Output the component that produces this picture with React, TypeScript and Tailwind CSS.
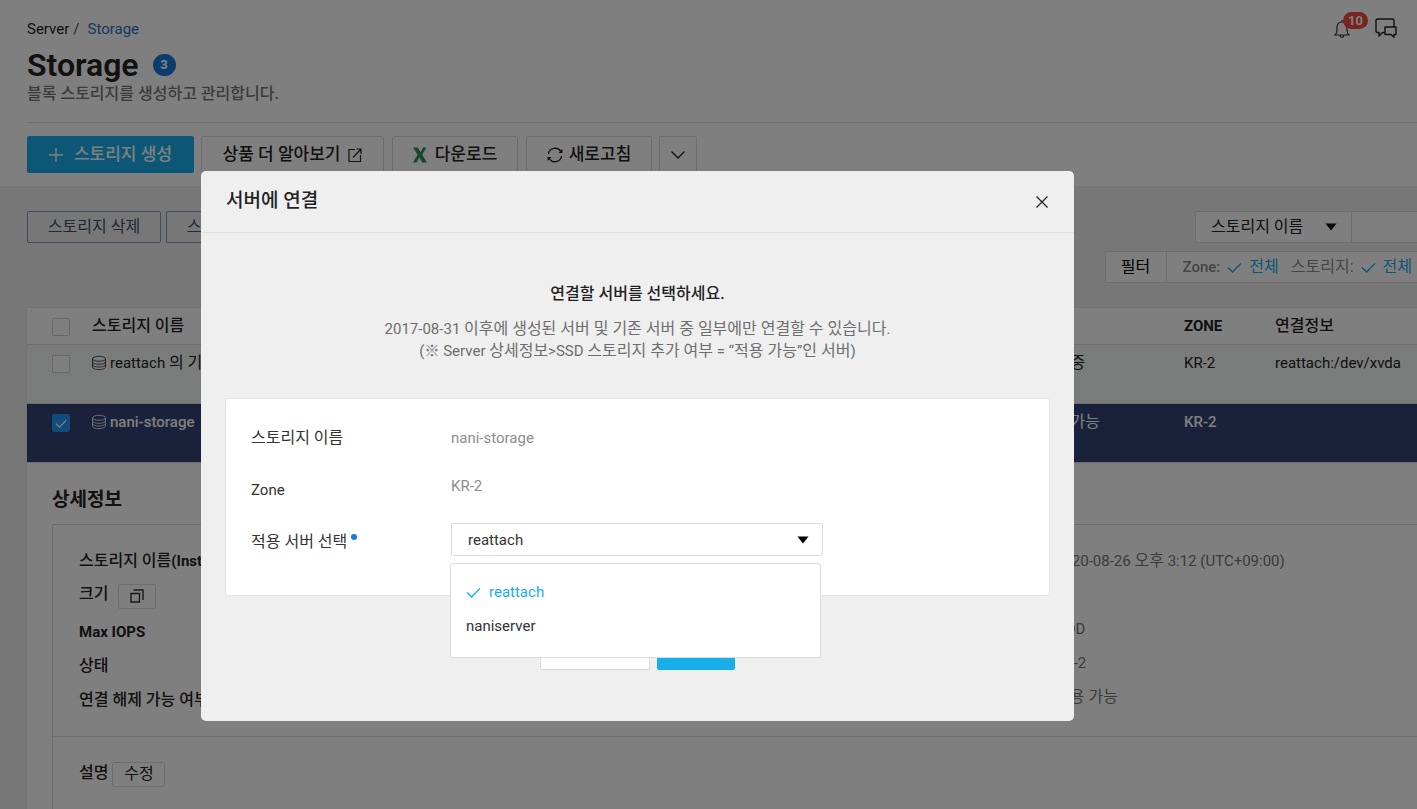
import React from "react";

const SANS = "font-['Roboto','Noto_Sans_CJK_KR',sans-serif]";

/* Hangul runs are set one pixel larger than the Latin text around them. */
function Mixed({ text }: { text: string }) {
  const parts = text.split(/([\u3131-\uD79D]+(?: +[\u3131-\uD79D]+)*)/);
  return (
    <>
      {parts.map((part, i) =>
        i % 2 === 1 ? (
          <span key={i} className="text-[16px]">
            {part}
          </span>
        ) : (
          part
        ),
      )}
    </>
  );
}

function Check({ className }: { className: string }) {
  return (
    <svg viewBox="0 0 16 12" className={className} fill="none" stroke="currentColor" strokeWidth="1.5" aria-hidden="true">
      <path d="M1 6l5 5 9-9.500" />
    </svg>
  );
}

function Database() {
  return (
    <svg viewBox="1 0 14 16" className="h-4 w-[14px] shrink-0" fill="none" stroke="currentColor" strokeWidth="0.8" aria-hidden="true">
      <ellipse cx="8" cy="3.800" rx="6.500" ry="2.500" />
      <path d="M1.500 4v8c0 1.500 2.900 2.600 6.500 2.600s6.500-1.100 6.500-2.600V4M1.500 6.700c0 1.500 2.900 2.600 6.500 2.600s6.500-1.100 6.500-2.600M1.500 9.400c0 1.500 2.900 2.600 6.500 2.600s6.500-1.100 6.500-2.600" />
    </svg>
  );
}

function Caret() {
  return (
    <svg viewBox="0 0 12 8" className="pointer-events-none absolute top-1/2 right-[14px] h-2 w-3 -translate-y-1/2" aria-hidden="true">
      <path d="M0.500 0.500h11L6 7.500z" fill="#000" />
    </svg>
  );
}

function Header() {
  return (
    <header className="bg-white pt-[18px] pb-[13px] pl-[27px]">
      <div className="flex items-start justify-between">
        <div>
          <nav className="flex gap-1 leading-[22px]">
            <a href="#server">Server</a>
            <span className="mr-1 text-[#555]">/</span>
            <a href="#storage" className="text-[#2a6fc9]">Storage</a>
          </nav>
          <div className="mt-1 flex items-center gap-[14px]">
            <h1 className="text-[32px] leading-[42px] font-semibold">Storage</h1>
            <span className="flex h-[22px] w-[23px] items-center justify-center rounded-full bg-[#1779d8] text-[13px] font-bold text-white">3</span>
          </div>
          <p className="text-[16px] leading-[16px] font-medium text-[#777]">블록 스토리지를 생성하고 관리합니다.</p>
        </div>
        <div className="flex items-start gap-2 pr-5">
          <button type="button" aria-label="알림" className="relative h-[22px] w-[33px]">
            <svg viewBox="0 0 16 20" className="h-5 w-4" fill="none" stroke="#333" strokeWidth="1.200" aria-hidden="true">
              <path d="M1 16h14c-1.500-1.500-2-3-2-5V8.500C13 5 11 3 8 3S3 5 3 8.500V11c0 2-.5 3.500-2 5zM8 3V1M6.300 16.500c0 2.500 3.400 2.500 3.400 0" />
            </svg>
            <span className="absolute -top-[6px] left-[9px] flex h-[17px] w-[25px] items-center justify-center rounded-full bg-[#f0483e] text-[13px] font-bold text-white">10</span>
          </button>
          <button type="button" aria-label="문의">
            <svg viewBox="0 0 22 20" className="h-5 w-[22px]" fill="none" stroke="#222" strokeWidth="1.400" strokeLinejoin="round" aria-hidden="true">
              <path d="M10 14.500H7.500L4 18v-3.500H2.500C1.500 14.500 1 14 1 13V2.500C1 1.500 1.500 1 2.500 1h15c1 0 1.500.5 1.500 1.500V9M10 9h11v7.500h-2V19.300l-3-2.800h-6z" />
            </svg>
          </button>
        </div>
      </div>
      <div className="mt-5 flex gap-2 border-t border-[#dcdcdc] pt-[13px] text-[17px] font-medium">
        <button type="button" className="mr-[-1px] flex h-[37px] w-[167px] items-center justify-center gap-[11px] rounded-[2px] bg-[#17aeea] text-white">
          <svg viewBox="0 0 14 14" className="size-[14px]" stroke="currentColor" strokeWidth="1.500" aria-hidden="true">
            <path d="M7 0v14M0 7h14" />
          </svg>
          스토리지 생성
        </button>
        <button type="button" className="flex h-[37px] w-[183px] items-center justify-center gap-2 rounded-[2px] border border-[#dcdcdc]">
          상품 더 알아보기
          <svg viewBox="0 0 14 14" className="size-[14px]" fill="none" stroke="currentColor" strokeWidth="1.200" aria-hidden="true">
            <path d="M7 1.500H1v12h11.500V7M5 9.500L13 1M8.500 1H13v5" />
          </svg>
        </button>
        <button type="button" className="flex h-[37px] w-[126px] items-center justify-center gap-2 rounded-[2px] border border-[#dcdcdc]">
          <svg viewBox="0 0 14 16" className="h-4 w-[14px]" fill="#2d8c5a" aria-hidden="true">
            <path d="M0 .5h4.800l2.700 4.700L10 .5h3.600L9.200 7.800 14 15.500H9.200L6.300 10.500l-2.700 5H0l4.600-7.700z" />
          </svg>
          다운로드
        </button>
        <button type="button" className="flex h-[37px] w-[126px] items-center justify-center gap-[6px] rounded-[2px] border border-[#dcdcdc]">
          <svg viewBox="0 0 16 16" className="size-4" fill="none" stroke="currentColor" strokeWidth="1.400" aria-hidden="true">
            <path d="M1.500 7A6.600 6.600 0 0 1 14 5M14.500 9A6.600 6.600 0 0 1 2 11" />
            <path d="M15.500 2v4h-4zM0.500 14v-4h4z" fill="currentColor" stroke="none" />
          </svg>
          새로고침
        </button>
        <button type="button" aria-label="더보기" className="mr-auto -ml-px flex h-[37px] w-[38px] items-center justify-center rounded-[2px] border border-[#dcdcdc]">
          <svg viewBox="0 0 14 8" className="h-2 w-[14px]" fill="none" stroke="currentColor" strokeWidth="1.400" aria-hidden="true">
            <path d="M0.500 0.500L7 7l6.500-6.500" />
          </svg>
        </button>
      </div>
    </header>
  );
}

function Controls() {
  const outline = "h-8 w-[134px] rounded-[2px] border border-[#8398b8] text-[16px] text-[#3c5071]";
  return (
    <div className="flex items-start justify-between pt-[25px] pl-[27px]">
      <div className="flex gap-[5px]">
        <button type="button" className={outline}>스토리지 삭제</button>
        <button type="button" className={outline}>스토리지 연결</button>
      </div>
      <div className="flex flex-col items-end gap-2">
        <div className="flex h-8 rounded-l-[2px] border border-r-0 border-[#dcdcdc] bg-white text-[16px]">
          <div className="relative w-[156px] border-r border-[#dcdcdc]">
            <select aria-label="검색 조건" className="h-full w-full appearance-none bg-transparent pl-[15px]">
              <option>스토리지 이름</option>
            </select>
            <Caret />
          </div>
          <input aria-label="검색어" className="w-[65px] min-w-0 bg-transparent px-2" />
        </div>
        <div className="flex h-8 items-center rounded-l-[2px] border border-r-0 border-[#dcdcdc] bg-white pr-[5px] text-[#8a8a8a]">
          <span className="mr-4 flex h-full w-[61px] items-center justify-center border-r border-[#dcdcdc] text-[16px] text-black">필터</span>
          <span className="font-medium">Zone:</span>
          <Check className="mr-[7px] ml-[7px] h-[11px] w-[15px] text-[#17aeea]" />
          <a href="#zone" className="text-[16px] text-[#17aeea]">전체</a>
          <span className="ml-3 text-[16px]">스토리지:</span>
          <Check className="mr-[7px] ml-[7px] h-[11px] w-[15px] text-[#17aeea]" />
          <a href="#kind" className="text-[16px] text-[#17aeea]">전체</a>
        </div>
      </div>
    </div>
  );
}

function Tick({ label, on }: { label: string; on?: boolean }) {
  return (
    <label className="relative mt-[2px] block size-[18px]">
      <input
        type="checkbox"
        aria-label={label}
        defaultChecked={on}
        className="block size-[18px] appearance-none rounded-[2px] border border-[#d0d0d0] bg-white checked:border-[#2196f3] checked:bg-[#2196f3]"
      />
      {on && <Check className="pointer-events-none absolute top-[5px] left-[3px] h-[9px] w-3 text-white" />}
    </label>
  );
}

function StorageTable() {
  return (
    <table className="w-full table-fixed border-collapse text-left align-top">
      <colgroup>
        <col className="w-[65px]" />
        <col />
        <col className="w-[147px]" />
        <col className="w-[91px]" />
        <col className="w-[142px]" />
      </colgroup>
      <thead>
        <tr className="h-[36px] border-b border-[#dcdcdc] bg-white">
          <th className="pl-[25px]"><Tick label="모두 선택" /></th>
          <th className="text-[16px] font-medium">스토리지 이름</th>
          <th className="text-[16px] font-medium">상태</th>
          <th className="font-bold">ZONE</th>
          <th className="text-[16px] font-medium">연결정보</th>
        </tr>
      </thead>
      <tbody>
        <tr className="h-[59px] border-b border-[#dcdcdc] bg-[#f4f8f6] align-top leading-6">
          <td className="pt-[8px] pl-[25px]"><Tick label="reattach 선택" /></td>
          <td className="pt-[6px]">
            <span className="flex items-center gap-1"><Database /><span><Mixed text="reattach 의 기본 스토리지" /></span></span>
          </td>
          <td className="pt-[6px] text-[16px]">사용 중</td>
          <td className="pt-[6px]">KR-2</td>
          <td className="pt-[6px]">reattach:/dev/xvda</td>
        </tr>
        <tr className="h-[59px] border-b border-[#dcdcdc] bg-[#334474] align-top leading-6 font-medium text-white">
          <td className="pt-[8px] pl-[25px]"><Tick label="nani-storage 선택" on /></td>
          <td className="pt-[6px]">
            <span className="flex items-center gap-1"><Database />nani-storage</span>
          </td>
          <td className="pt-[6px] text-[16px] font-normal">연결 가능</td>
          <td className="pt-[6px]">KR-2</td>
          <td />
        </tr>
      </tbody>
    </table>
  );
}

const NAMES = ["스토리지 이름(Instance ID)", "크기", "Max IOPS", "상태", "연결 해제 가능 여부"];
const VALUES = ["2020-08-26 오후 3:12 (UTC+09:00)", "", "HDD", "KR-2", "사용 가능"];

function Details() {
  return (
    <section className="pt-6 pl-[25px]">
      <h2 className="text-[19px] leading-[25px] font-bold">상세정보</h2>
      <div className="mt-3 rounded-tl-[2px] border-t border-l border-[#dcdcdc]">
        <div className="flex h-[212px] border-b border-[#dcdcdc] pt-[19px] pl-[26px]">
          <ul className="w-[976px] shrink-0 font-bold">
            {NAMES.map((name) =>
              name === "크기" ? (
                <li key={name} className="flex h-[37px] items-start gap-[10px]">
                  <span className="text-[16px] leading-8 font-medium">{name}</span>
                  <button type="button" aria-label="크기 변경" className="mt-[6px] flex h-[25px] w-[38px] items-center justify-center rounded-[2px] border border-[#dcdcdc]">
                    <svg viewBox="0 0 14 14" className="size-[14px]" fill="none" stroke="#333" strokeWidth="1.400" aria-hidden="true">
                      <path d="M1 4.500h8.500V13H1zM3.500 1h9.500v10" />
                    </svg>
                  </button>
                </li>
              ) : (
                <li key={name} className="h-[34px] leading-[34px] [&>span]:font-medium">
                  <Mixed text={name} />
                </li>
              ),
            )}
          </ul>
          <ul className="leading-[34px] whitespace-nowrap text-[#777]">
            {VALUES.map((value) => (
              <li key={value} className="h-[34px]"><Mixed text={value} /></li>
            ))}
          </ul>
        </div>
        <div className="flex h-24 items-start gap-1 pt-[25px] pl-[26px] text-[16px]">
          <span className="leading-[22px] font-medium">설명</span>
          <button type="button" className="h-[25px] w-[53px] rounded-[2px] border border-[#dcdcdc] leading-[22px]">수정</button>
        </div>
      </div>
    </section>
  );
}

function ConnectDialog() {
  const label = "w-[200px] shrink-0";
  return (
    <div role="dialog" aria-modal="true" aria-labelledby="dialog-title" className="w-[873px] rounded-[5px] bg-[#efefef] pb-[51px]">
      <div className="flex h-[62px] items-center justify-between border-b border-[#e0e0e0] pr-[26px] pl-[25px]">
        <h2 id="dialog-title" className="text-[19px] font-medium">서버에 연결</h2>
        <button type="button" aria-label="닫기">
          <svg viewBox="0 0 12 12" className="size-3" stroke="#222" strokeWidth="1.300" aria-hidden="true">
            <path d="M0.500 0.500l11 11M11.500 0.500l-11 11" />
          </svg>
        </button>
      </div>
      <div className="pt-[49px] text-center leading-[22px]">
        <p className="text-[16px] leading-6 font-medium">연결할 서버를 선택하세요.</p>
        <p className="mt-3 text-[#6e6e6e]">
          <Mixed text="2017-08-31 이후에 생성된 서버 및 기존 서버 중 일부에만 연결할 수 있습니다." />
          <br />
          <Mixed text="(※ Server 상세정보>SSD 스토리지 추가 여부 = “적용 가능”인 서버)" />
        </p>
      </div>
      <div className="mx-6 mt-9 h-[198px] rounded-[3px] border border-[#e4e4e4] bg-white pt-[27px] pl-[25px] leading-6 text-[#333]">
        <div className="flex h-[48px]">
          <span className={label}><Mixed text="스토리지 이름" /></span>
          <span className="text-[#8e8e8e]">nani-storage</span>
        </div>
        <div className="flex h-[49px]">
          <span className={`${label} pt-1`}>Zone</span>
          <span className="text-[#8e8e8e]">KR-2</span>
        </div>
        <div className="flex items-center">
          <label htmlFor="server" className="flex w-[200px] shrink-0 gap-1 pt-1">
            <Mixed text="적용 서버 선택" />
            <span className="mt-1 size-[6px] rounded-full bg-[#1779d8]" />
          </label>
          <div className="relative w-[372px]">
            <select id="server" className="block h-[33px] w-full appearance-none rounded-[2px] border border-[#dcdcdc] bg-white pl-4">
              <option>reattach</option>
              <option>naniserver</option>
            </select>
            <Caret />
            <ul role="listbox" aria-label="서버" className="absolute top-10 -left-px h-[95px] w-[371px] rounded-[3px] border border-[#dcdcdc] bg-white px-[15px] py-[11px]">
              <li role="option" aria-selected="true" className="flex h-[34px] items-center gap-2 text-[#17aeea]">
                <Check className="h-[11px] w-[15px]" />
                reattach
              </li>
              <li role="option" aria-selected="false" className="flex h-[34px] items-center">naniserver</li>
            </ul>
          </div>
        </div>
      </div>
      <div className="mt-[34px] flex justify-center gap-[7px] text-[16px] font-medium">
        <button type="button" className="h-10 w-[110px] rounded-[2px] border border-[#dcdcdc] bg-white">취소하기</button>
        <button type="button" className="h-10 w-[78px] rounded-[2px] bg-[#17aeea] text-white">연결</button>
      </div>
    </div>
  );
}

export default function App() {
  return (
    <div className={`${SANS} relative h-screen overflow-hidden bg-[#efefef] text-[15px] text-[#222]`}>
      <Header />
      <main>
        <Controls />
        <div className="mt-6 ml-[26px] rounded-tl-[2px] border-t border-l border-[#e4e4e4] bg-white">
          <StorageTable />
          <Details />
        </div>
      </main>
      <div className="fixed inset-0 flex items-start bg-black/50 pt-[171px] pl-[201px]">
        <ConnectDialog />
      </div>
    </div>
  );
}
